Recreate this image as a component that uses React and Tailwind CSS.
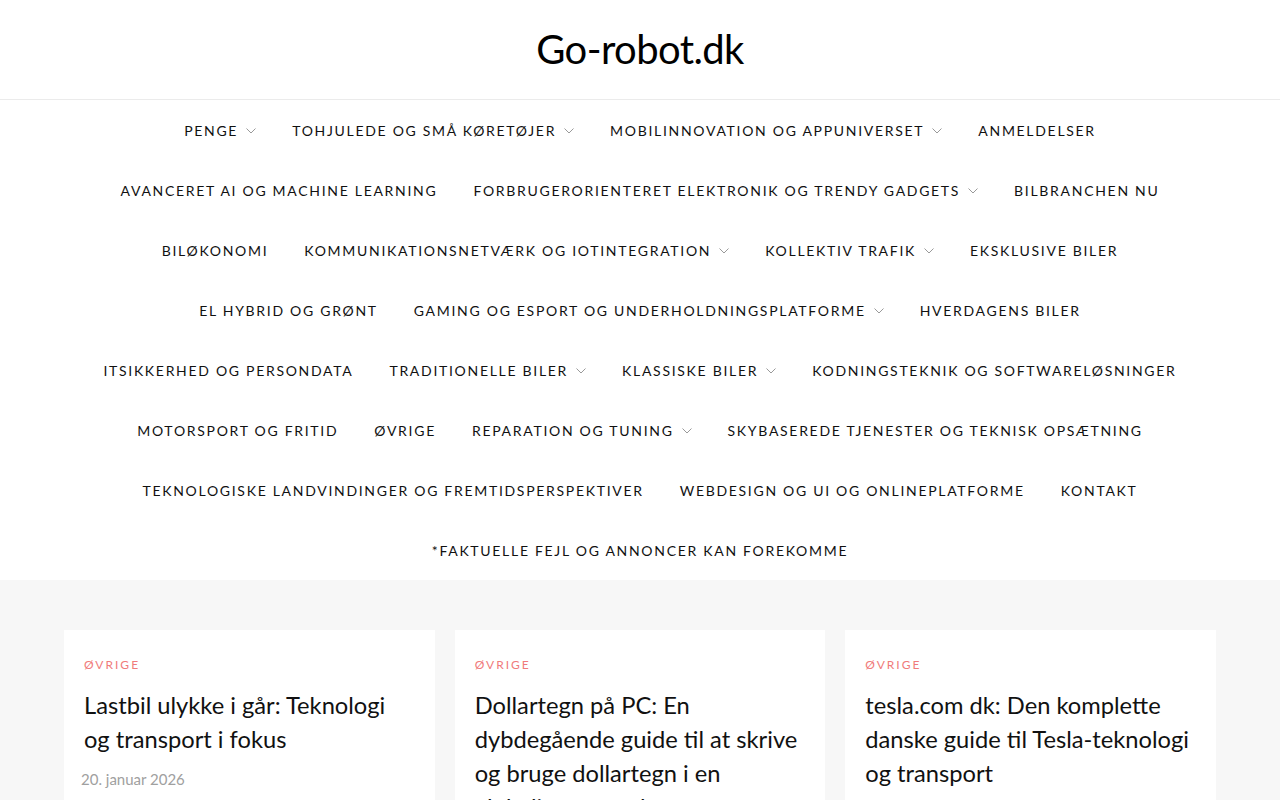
import React from 'react';

const rows = [
  [['Penge', true], ['Tohjulede og små køretøjer', true], ['Mobilinnovation og appuniverset', true], ['Anmeldelser', false]],
  [['Avanceret AI og machine learning', false], ['Forbrugerorienteret elektronik og trendy gadgets', true], ['Bilbranchen nu', false]],
  [['Biløkonomi', false], ['Kommunikationsnetværk og IoTintegration', true], ['Kollektiv trafik', true], ['Eksklusive biler', false]],
  [['El hybrid og grønt', false], ['Gaming og esport og underholdningsplatforme', true], ['Hverdagens biler', false]],
  [['ITsikkerhed og persondata', false], ['Traditionelle biler', true], ['Klassiske biler', true], ['Kodningsteknik og softwareløsninger', false]],
  [['Motorsport og fritid', false], ['Øvrige', false], ['Reparation og tuning', true], ['Skybaserede tjenester og teknisk opsætning', false]],
  [['Teknologiske landvindinger og fremtidsperspektiver', false], ['Webdesign og UI og onlineplatforme', false], ['Kontakt', false]],
  [['*Faktuelle fejl og annoncer kan forekomme', false]],
];

const posts = [
  { title: 'Lastbil ulykke i går: Teknologi og transport i fokus', date: '20. januar 2026' },
  { title: 'Dollartegn på PC: En dybdegående guide til at skrive og bruge dollartegn i en globaliseret verden', date: '19. januar 2026' },
  { title: 'tesla.com dk: Den komplette danske guide til Tesla-teknologi og transport', date: '18. januar 2026' },
];

const Chevron = () => (
  <svg width="10" height="6" viewBox="0 0 10 6" className="ml-[8px] mt-[2px]" fill="none">
    <path d="M0.5 0.5 L5 5 L9.5 0.5" stroke="#999" strokeWidth="1" />
  </svg>
);

export default function App() {
  return (
    <div className="min-h-screen bg-[#f7f7f7] text-black" style={{ fontFamily: 'Lato, "Noto Sans", sans-serif' }}>
      <header className="bg-white">
        <div className="h-[100px] flex items-center justify-center border-b border-[#ebebeb]">
          <h1 className="text-[40px] leading-none tracking-[-0.6px] font-normal -mt-[2px]">Go-robot.dk</h1>
        </div>
        <nav>
          {rows.map((row, i) => (
            <ul key={i} className="flex justify-center items-center h-[60px]">
              {row.map(([label, sub]) => (
                <li key={label} className="px-[18px] flex items-center uppercase text-[14px] tracking-[1.7px] text-[#111]">
                  <span>{label}</span>
                  {sub && <Chevron />}
                </li>
              ))}
            </ul>
          ))}
        </nav>
      </header>
      <main className="max-w-[1152px] mx-auto pt-[50px] grid grid-cols-3 gap-[20px]">
        {posts.map((p) => (
          <article key={p.title} className="bg-white px-[20px] pt-[26px] pb-[40px] h-[300px]">
            <div className="uppercase text-[12px] tracking-[2px] text-[#f07b7b]">Øvrige</div>
            <h2 className="mt-[14px] text-[23.7px] leading-[34px] font-normal text-[#111]">{p.title}</h2>
            <div className="mt-[12px] -ml-[3px] text-[15px] text-[#a0a0a0]">{p.date}</div>
          </article>
        ))}
      </main>
    </div>
  );
}
